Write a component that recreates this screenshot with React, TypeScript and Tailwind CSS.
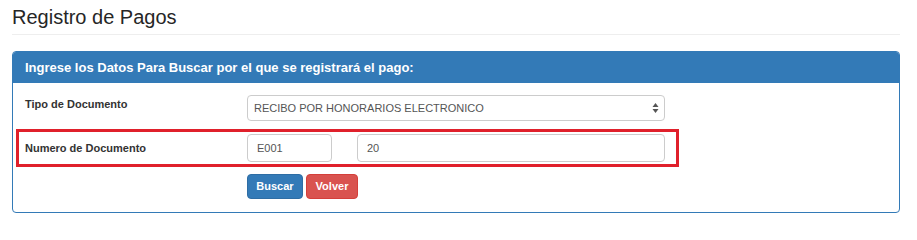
import React from "react";

function SelectArrows() {
  return (
    <svg width="7" height="12" viewBox="0 0 7 12" className="shrink-0">
      <path d="M3.5 1 L6.5 5 H0.5 Z" fill="#555" />
      <path d="M3.5 11 L6.5 7 H0.5 Z" fill="#555" />
    </svg>
  );
}

export default function App() {
  return (
    <div
      className="w-[917px] h-[232px] bg-white px-3 text-[#333]"
      style={{ fontFamily: '"Liberation Sans", Arial, sans-serif' }}
    >
      {/* Page title */}
      <div className="w-[888px] border-b border-[#eee] pt-[6px] pb-[5px]">
        <h1 className="text-[20px] leading-[23px] font-normal text-[#262626]">Registro de Pagos</h1>
      </div>

      {/* Panel */}
      <div className="mt-4 w-[888px] rounded-[4px] border border-[#337ab7]">
        <div className="h-[31px] bg-[#337ab7] px-3 flex items-center rounded-t-[3px]">
          <span className="text-[13px] font-bold text-white">
            Ingrese los Datos Para Buscar por el que se registrará el pago:
          </span>
        </div>

        <div className="px-3 pt-3 pb-[13px] flex flex-col">
          {/* Tipo de documento */}
          <div className="flex items-start">
            <label className="w-[222px] pt-[2px] text-[11px] font-bold leading-[15px]">
              Tipo de Documento
            </label>
            <div className="w-[418px] h-[26px] rounded-[4px] border border-[#ccc] pl-[6px] pr-[5px] flex items-center justify-between text-[11px] text-[#555]">
              <span>RECIBO POR HONORARIOS ELECTRONICO</span>
              <SelectArrows />
            </div>
          </div>

          {/* Numero de documento (highlighted) */}
          <div className="mt-2 -ml-[9px] w-[663px] h-[38px] border-[3px] border-[#e0202b] pl-[6px] flex items-center">
            <label className="w-[222px] text-[11px] font-bold leading-[15px]">
              Numero de Documento
            </label>
            <div className="flex items-center gap-[25px]">
              <div className="w-[85px] h-[28px] rounded-[4px] border border-[#ccc] px-[9px] flex items-center text-[11px] text-[#555]">
                E001
              </div>
              <div className="w-[308px] h-[28px] rounded-[4px] border border-[#ccc] px-[9px] flex items-center text-[11px] text-[#555]">
                20
              </div>
            </div>
          </div>

          {/* Buttons */}
          <div className="mt-[7px] ml-[222px] flex gap-[3px]">
            <button className="h-[25px] w-[56px] rounded-[4px] border border-[#2e6da4] bg-[#337ab7] text-white text-[11px] font-bold flex items-center justify-center">
              Buscar
            </button>
            <button className="h-[25px] w-[52px] rounded-[4px] border border-[#d43f3a] bg-[#d9534f] text-white text-[11px] font-bold flex items-center justify-center">
              Volver
            </button>
          </div>
        </div>
      </div>
    </div>
  );
}
